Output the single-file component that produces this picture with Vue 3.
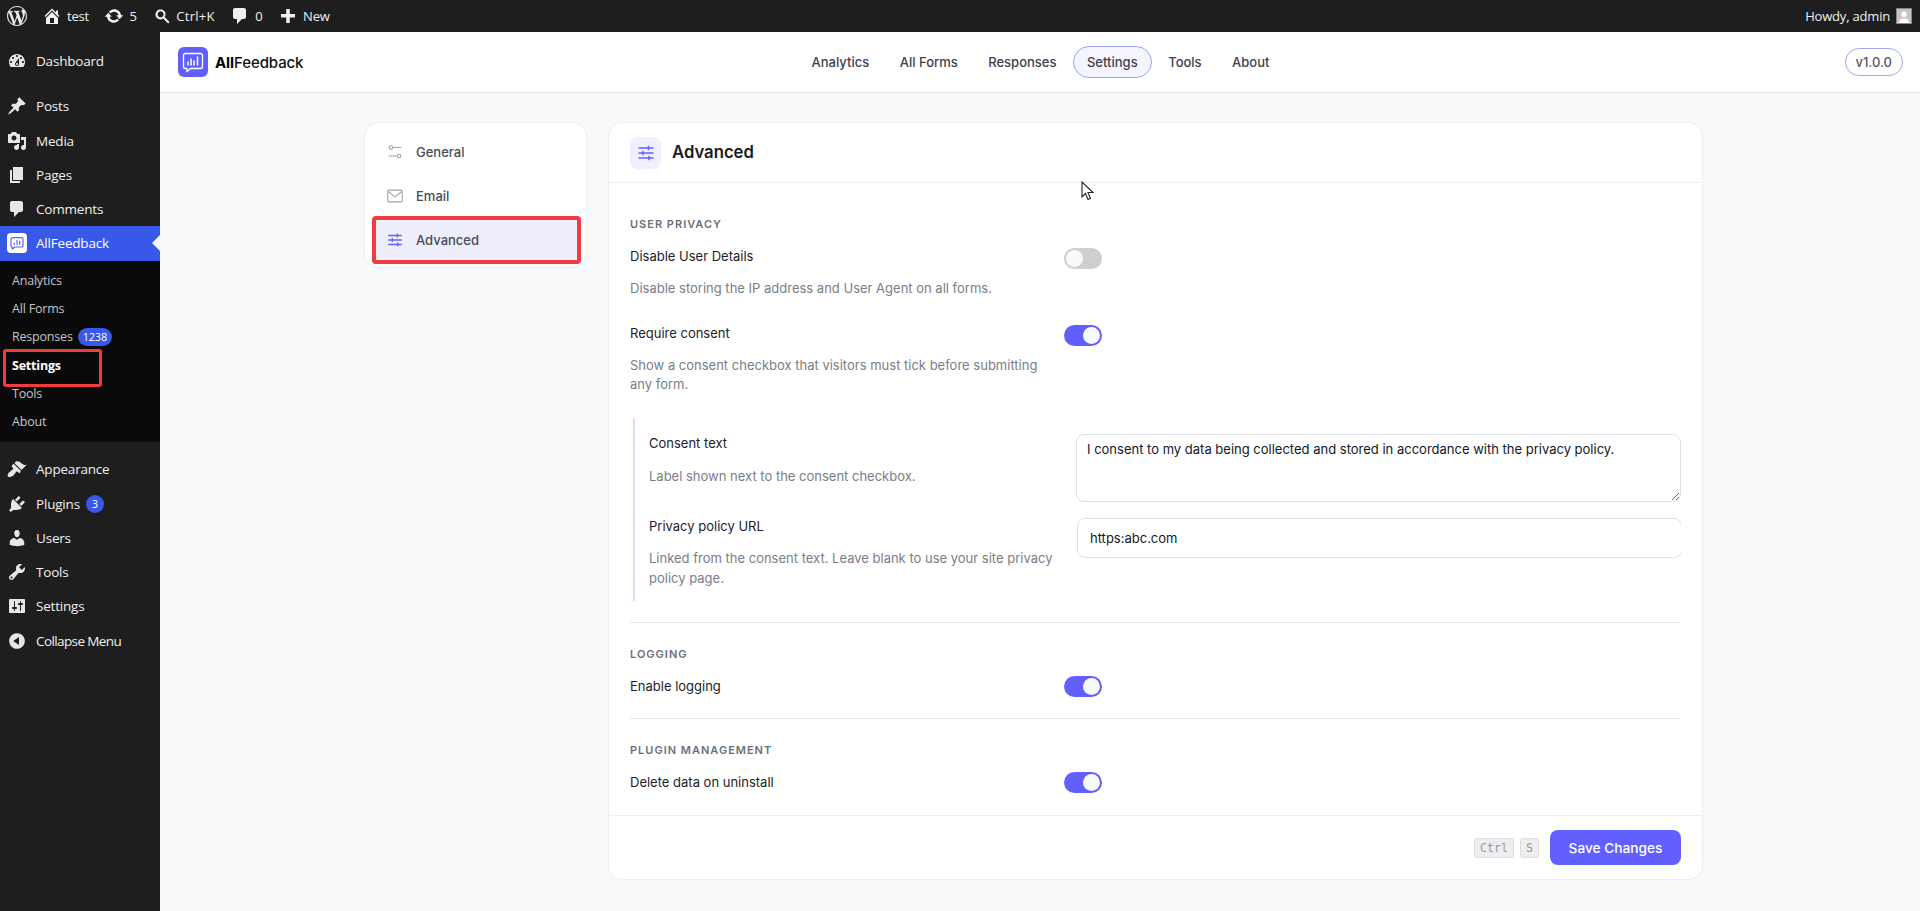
<script setup>
const adminBar = {
  wp: 'M20 10c0-5.51-4.49-10-10-10C4.48 0 0 4.49 0 10c0 5.52 4.48 10 10 10 5.51 0 10-4.48 10-10zM7.78 15.37L4.37 6.22c.55-.02 1.17-.08 1.17-.08.5-.06.44-1.13-.06-1.11 0 0-1.45.11-2.37.11-.18 0-.37 0-.58-.01C4.12 2.69 6.87 1.11 10 1.11c2.33 0 4.45.87 6.05 2.34-.68-.11-1.65.39-1.65 1.58 0 .74.45 1.36.9 2.1.35.61.55 1.36.55 2.46 0 1.49-1.4 5-1.4 5l-3.03-8.37c.54-.02.82-.17.82-.17.5-.05.44-1.25-.06-1.22 0 0-1.44.12-2.38.12-.87 0-2.33-.12-2.33-.12-.5-.03-.56 1.2-.06 1.22l.92.08 1.26 3.41zM17.41 10c.24-.64.74-1.87.43-4.25.7 1.29 1.05 2.71 1.05 4.25 0 3.29-1.73 6.24-4.4 7.78.97-2.59 1.94-5.2 2.92-7.78zM6.1 18.09C3.12 16.65 1.11 13.53 1.11 10c0-1.3.23-2.48.72-3.59C3.25 10.3 4.67 14.2 6.1 18.09zm4.03-6.63l2.58 6.98c-.86.29-1.76.45-2.71.45-.79 0-1.57-.11-2.29-.33.81-2.38 1.62-4.74 2.42-7.1z',
  home: 'M16 8.5l1.53 1.53-1.06 1.06L10 4.62l-6.47 6.47-1.06-1.06L10 2.5l4 4v-2h2v4zm-6-2.46l6 5.99V18H4v-5.97zM12 17v-5H8v5h4z',
  update: 'M10.2 3.28c3.53 0 6.43 2.61 6.92 6h2.08l-3.5 4-3.5-4h2.32c-.45-1.97-2.21-3.45-4.32-3.45-1.45 0-2.73.71-3.54 1.78L4.95 5.66C6.23 4.2 8.11 3.28 10.2 3.28zm-.4 13.44c-3.52 0-6.43-2.61-6.92-6H.8l3.5-4c1.17 1.33 2.33 2.67 3.5 4H5.48c.45 1.97 2.21 3.45 4.32 3.45 1.45 0 2.73-.71 3.54-1.78l1.71 1.95c-1.28 1.46-3.15 2.38-5.25 2.38z',
  search: 'M12.14 4.78c1.7 1.7 1.9 4.38.5 6.32l4.37 4.37c.39.39.39 1.02 0 1.41s-1.02.39-1.41 0l-4.37-4.37c-1.94 1.4-4.62 1.2-6.32-.5-1.95-1.95-1.95-5.12 0-7.07s5.12-1.95 7.07 0zM10.73 10.44c1.17-1.17 1.17-3.07 0-4.24s-3.07-1.17-4.24 0-1.17 3.07 0 4.24 3.07 1.17 4.24 0z',
  comment: 'M5 2h9c1.1 0 2 .9 2 2v7c0 1.1-.9 2-2 2h-2l-5 5v-5H5c-1.1 0-2-.9-2-2V4c0-1.1.9-2 2-2z',
  plus: 'M17 8v3.5h-5.2V17H8.2v-5.5H3V8h5.2V3h3.6v5H17z',
}
const icons = {
  dashboard: 'M3.76 16h12.48c1.1-1.37 1.76-3.11 1.76-5 0-4.42-3.58-8-8-8s-8 3.58-8 8c0 1.89.66 3.63 1.76 5zM10 4c.55 0 1 .45 1 1s-.45 1-1 1-1-.45-1-1 .45-1 1-1zM6 6c.55 0 1 .45 1 1s-.45 1-1 1-1-.45-1-1 .45-1 1-1zm8 0c.55 0 1 .45 1 1s-.45 1-1 1-1-.45-1-1 .45-1 1-1zm-5.37 5.55L12 7v6c0 1.1-.9 2-2 2s-2-.9-2-2c0-.57.24-1.08.63-1.45zM4 10c.55 0 1 .45 1 1s-.45 1-1 1-1-.45-1-1 .45-1 1-1zm12 0c.55 0 1 .45 1 1s-.45 1-1 1-1-.45-1-1 .45-1 1-1zm-5 3c0-.55-.45-1-1-1s-1 .45-1 1 .45 1 1 1 1-.45 1-1z',
  post: 'M10.44 3.02l1.82-1.82 6.36 6.35-1.83 1.82c-1.05-.68-2.48-.57-3.41.36l-.75.75c-.92.93-1.04 2.35-.35 3.41l-1.83 1.82-2.41-2.41-2.8 2.79c-.42.42-3.38 2.71-3.8 2.29s1.86-3.39 2.28-3.81l2.79-2.79L4.1 9.36l1.83-1.82c1.05.69 2.48.57 3.4-.36l.75-.75c.93-.92 1.05-2.35.36-3.41z',
  media: 'M13 11V4c0-.55-.45-1-1-1h-1.67L9 1H5L3.67 3H2c-.55 0-1 .45-1 1v7c0 .55.45 1 1 1h10c.55 0 1-.45 1-1zM7 4.5c1.38 0 2.5 1.12 2.5 2.5S8.38 9.5 7 9.5 4.5 8.38 4.5 7 5.62 4.5 7 4.5zM14 6h5v10.5c0 1.38-1.12 2.5-2.5 2.5S14 17.88 14 16.5s1.12-2.5 2.5-2.5c.17 0 .34.02.5.05V9h-3V6zm-4 8.05V13h2v3.5c0 1.38-1.12 2.5-2.5 2.5S7 17.88 7 16.5 8.12 14 9.5 14c.17 0 .34.02.5.05z',
  page: 'M6 15V2h10v13H6zm-1 1h8v2H3V5h2v11z',
  comment: adminBar.comment,
  appearance: 'M14.48 11.06L7.41 3.99l1.5-1.5c.5-.56 2.3-.47 3.51.32 1.21.8 1.43 1.28 2.91 2.1 1.18.64 2.45 1.26 4.45.85zm-.71.71L6.7 4.7 4.93 6.47c-.39.39-.39 1.02 0 1.41l1.06 1.06c.39.39.39 1.03 0 1.42-.6.6-1.43 1.11-2.21 1.69-.35.26-.7.53-1.01.84C1.43 13.23.78 15.17.66 16.25c-.07.58 0 1.13.32 1.45.33.32.88.39 1.46.32 1.08-.12 3.02-.77 4.36-2.11.31-.31.58-.66.84-1.01.58-.78 1.09-1.61 1.69-2.21.39-.39 1.03-.39 1.42 0l1.06 1.06c.39.39 1.02.39 1.41 0z',
  plugins: 'M13.11 4.36L9.87 7.6 8 5.73l3.24-3.24c.35-.34 1.05-.2 1.56.32.52.51.66 1.21.31 1.55zm-8 1.77l.91-1.12 9.01 9.01-1.19.84c-.71.71-2.63 1.16-3.82 1.16H6.14L4.9 17.26c-.59.59-1.54.59-2.12 0-.59-.58-.59-1.53 0-2.12l1.24-1.24v-3.88c0-1.13.4-3.19 1.09-3.89zm7.26 3.97l3.24-3.24c.34-.35 1.04-.21 1.55.31.52.51.66 1.21.31 1.55l-3.24 3.25z',
  users: 'M10 9.25c-2.27 0-2.73-3.44-2.73-3.44C7 4.02 7.82 2 9.97 2c2.16 0 2.98 2.02 2.71 3.81 0 0-.41 3.44-2.68 3.44zm0 2.57L12.72 10c2.39 0 4.52 2.33 4.52 4.53v2.49s-3.65 1.13-7.24 1.13c-3.65 0-7.24-1.13-7.24-1.13v-2.49c0-2.25 1.94-4.48 4.47-4.48z',
  tools: 'M16.68 9.77c-1.34 1.34-3.3 1.67-4.95.99l-5.41 6.52c-.99.99-2.59.99-3.58 0s-.99-2.59 0-3.57l6.52-5.42c-.68-1.65-.35-3.61.99-4.95 1.28-1.28 3.12-1.62 4.72-1.06l-2.89 2.89 2.82 2.82 2.86-2.87c.53 1.58.18 3.39-1.08 4.65zM3.81 16.21c.4.39 1.04.39 1.43 0 .4-.4.4-1.04 0-1.43-.39-.4-1.03-.4-1.43 0-.39.39-.39 1.03 0 1.43z',
  settings: 'M18 16V4c0-.55-.45-1-1-1H3c-.55 0-1 .45-1 1v12c0 .55.45 1 1 1h14c.55 0 1-.45 1-1zM8 11h1c.55 0 1 .45 1 1s-.45 1-1 1H8v1.5c0 .28-.22.5-.5.5s-.5-.22-.5-.5V13H6c-.55 0-1-.45-1-1s.45-1 1-1h1V5.5c0-.28.22-.5.5-.5s.5.22.5.5V11zm5-2h-1c-.55 0-1-.45-1-1s.45-1 1-1h1V5.5c0-.28.22-.5.5-.5s.5.22.5.5V7h1c.55 0 1 .45 1 1s-.45 1-1 1h-1v5.5c0 .28-.22.5-.5.5s-.5-.22-.5-.5V9z',
  collapse: 'M10 2.16c4.33 0 7.84 3.51 7.84 7.84s-3.51 7.84-7.84 7.84S2.16 14.33 2.16 10 5.71 2.16 10 2.16zm2 11.72V6.12L6.18 9.97z',
}
const topMenu = [
  { name: 'Posts', icon: icons.post },
  { name: 'Media', icon: icons.media },
  { name: 'Pages', icon: icons.page },
  { name: 'Comments', icon: icons.comment },
]
const bottomMenu = [
  { name: 'Appearance', icon: icons.appearance },
  { name: 'Plugins', icon: icons.plugins, badge: '3' },
  { name: 'Users', icon: icons.users },
  { name: 'Tools', icon: icons.tools },
  { name: 'Settings', icon: icons.settings },
  { name: 'Collapse Menu', icon: icons.collapse, tight: true },
]
const subMenu = [
  { name: 'Analytics' },
  { name: 'All Forms' },
  { name: 'Responses', badge: '1238' },
  { name: 'Settings', current: true },
  { name: 'Tools' },
  { name: 'About' },
]
const nav = ['Analytics', 'All Forms', 'Responses', 'Settings', 'Tools', 'About']
const consentText = 'I consent to my data being collected and stored in accordance with the privacy policy.'
</script>

<template>
  <div class="page">
    <header class="adminbar">
      <div class="ab-left">
        <svg class="ab-wp" viewBox="0 0 20 20"><path :d="adminBar.wp" /></svg>
        <span class="ab-item"><svg viewBox="0 0 20 20"><path :d="adminBar.home" /></svg>test</span>
        <span class="ab-item"><svg viewBox="0 0 20 20"><path :d="adminBar.update" /></svg>5</span>
        <span class="ab-item wide"><svg viewBox="0 0 20 20"><path :d="adminBar.search" /></svg>Ctrl+K</span>
        <span class="ab-item"><svg viewBox="0 0 20 20"><path :d="adminBar.comment" /></svg>0</span>
        <span class="ab-item"><svg viewBox="0 0 20 20"><path :d="adminBar.plus" /></svg>New</span>
      </div>
      <div class="ab-right">
        Howdy, admin
        <span class="avatar">
          <svg viewBox="0 0 16 16"><rect width="16" height="16" fill="#c4c4c4" /><circle cx="8" cy="6" r="3.2" fill="#fff" /><path d="M2 16c.5-4 3-5.5 6-5.5s5.500 1.500 6 5.500z" fill="#fff" /></svg>
        </span>
      </div>
    </header>

    <div class="body">
      <aside class="sidebar">
        <div class="menu-item first">
          <svg viewBox="0 0 20 20"><path :d="icons.dashboard" /></svg>
          <span>Dashboard</span>
        </div>
        <div class="menu-sep"></div>
        <div v-for="m in topMenu" :key="m.name" class="menu-item">
          <svg viewBox="0 0 20 20"><path :d="m.icon" /></svg>
          <span>{{ m.name }}</span>
        </div>
        <div class="menu-item active">
          <span class="af-mini">
            <svg viewBox="0 0 24 24" fill="none" stroke="#6060ff" stroke-width="1.8" stroke-linejoin="round"><path d="M5 4h14a2 2 0 0 1 2 2v10a2 2 0 0 1-2 2H9l-4 3v-3a2 2 0 0 1-2-2V6a2 2 0 0 1 2-2z" /><path d="M8 14v-2M12 14V8M16 14V9" stroke-linecap="round" /></svg>
          </span>
          <span>AllFeedback</span>
          <i class="arrow"></i>
        </div>
        <div class="submenu">
          <div v-for="s in subMenu" :key="s.name" class="sub-item" :class="{ current: s.current }">
            {{ s.name }}
            <span v-if="s.badge" class="badge sub-badge">{{ s.badge }}</span>
            <i v-if="s.current" class="mark mark-sub"></i>
          </div>
        </div>
        <div class="menu-gap"></div>
        <div v-for="m in bottomMenu" :key="m.name" class="menu-item" :class="{ tight: m.tight }">
          <svg viewBox="0 0 20 20"><path :d="m.icon" /></svg>
          <span>{{ m.name }}</span>
          <span v-if="m.badge" class="badge">{{ m.badge }}</span>
        </div>
      </aside>

      <main class="main">
        <div class="topnav">
          <div class="brand">
            <span class="brand-logo">
              <svg viewBox="0 0 30 30" fill="none" stroke="#fff" stroke-width="1.3" stroke-linejoin="round" stroke-linecap="round"><path d="M7.500 6.500h15a2 2 0 0 1 2 2v11a2 2 0 0 1-2 2H12.500l-3.500 3v-3H7.500a2 2 0 0 1-2-2v-11a2 2 0 0 1 2-2z" /><path d="M10 18v-3M13 18v-6M16 18v-4M19.500 18v-8" stroke-width="1.500" /></svg>
            </span>
            <span class="brand-name"><b>All</b>Feedback</span>
          </div>
          <nav class="nav">
            <a v-for="n in nav" :key="n" :class="{ on: n === 'Settings' }">{{ n }}</a>
          </nav>
          <div class="version-wrap"><span class="version">v1.0.0</span></div>
        </div>

        <div class="content">
          <div class="side-card">
            <div class="side-item">
              <svg viewBox="0 0 20 20" fill="none" stroke="#9ca3af" stroke-width="1.200"><circle cx="5.500" cy="5" r="2" /><path d="M8 5h9M3 14.500h9" /><circle cx="14.500" cy="14.500" r="2" /></svg>
              General
            </div>
            <div class="side-item">
              <svg viewBox="0 0 20 20" fill="none" stroke="#a3a3a8" stroke-width="1.200"><rect x="2" y="3.500" width="16" height="13" rx="1.500" /><path d="M2.500 5l7.500 6 7.500-6" /></svg>
              Email
            </div>
            <div class="side-item selected">
              <svg viewBox="0 0 20 20" fill="none" stroke="#6160ff" stroke-width="1.400"><path d="M2.500 5h15M2.500 10h15M2.500 15h15" /><path d="M12.500 2.800v4.400M7 7.800v4.400M13 12.800v4.400" /></svg>
              Advanced
              <i class="mark mark-side"></i>
            </div>
          </div>

          <section class="panel">
            <div class="panel-head">
              <span class="panel-icon">
                <svg viewBox="0 0 20 20" fill="none" stroke="#6160ff" stroke-width="1.400"><path d="M2.500 5h15M2.500 10h15M2.500 15h15" /><path d="M12.500 2.800v4.400M7 7.800v4.400M13 12.800v4.400" /></svg>
              </span>
              <h1>Advanced</h1>
            </div>

            <div class="panel-body">
              <div class="group">
                <h2>USER PRIVACY</h2>
                <div class="row row-toggle">
                  <div class="text">
                    <div class="label">Disable User Details</div>
                    <p class="desc">Disable storing the IP address and User Agent on all forms.</p>
                  </div>
                  <span class="toggle"></span>
                </div>
                <div class="row row-toggle consent-row">
                  <div class="text">
                    <div class="label">Require consent</div>
                    <p class="desc">Show a consent checkbox that visitors must tick before submitting any form.</p>
                  </div>
                  <span class="toggle on"></span>
                </div>
                <div class="nested">
                  <div class="row nested-row">
                    <div class="text">
                      <div class="label">Consent text</div>
                      <p class="desc">Label shown next to the consent checkbox.</p>
                    </div>
                    <textarea class="field area" readonly :value="consentText"></textarea>
                  </div>
                  <div class="row nested-row url-row">
                    <div class="text">
                      <div class="label">Privacy policy URL</div>
                      <p class="desc">Linked from the consent text. Leave blank to use your site privacy policy page.</p>
                    </div>
                    <input class="field input" readonly value="https:abc.com" />
                  </div>
                </div>
              </div>

              <div class="group divided logging">
                <h2>LOGGING</h2>
                <div class="row single">
                  <div class="text"><div class="label">Enable logging</div></div>
                  <span class="toggle on"></span>
                </div>
              </div>

              <div class="group divided plugin">
                <h2>PLUGIN MANAGEMENT</h2>
                <div class="row single">
                  <div class="text"><div class="label">Delete data on uninstall</div></div>
                  <span class="toggle on"></span>
                </div>
              </div>
            </div>

            <div class="panel-foot">
              <kbd>Ctrl</kbd>
              <kbd>S</kbd>
              <button class="save" type="button">Save Changes</button>
            </div>
          </section>
        </div>

        <svg class="cursor" width="14" height="21" viewBox="0 0 14 21"><path d="M1 1v15l3.500-3.500 2.500 6 2.500-1-2.500-6h5z" fill="#fff" stroke="#23233a" stroke-width="1.100" /></svg>
      </main>
    </div>
  </div>
</template>

<style>
html, body { margin: 0; background: #f8f9fb; }
</style>

<style scoped>
* { box-sizing: border-box; }
.page { width: 1920px; height: 911px; overflow: hidden; display: flex; flex-direction: column; font-family: Inter, "Liberation Sans", sans-serif; background: #f8f9fb; }
svg { display: block; }

.adminbar { height: 32px; flex: none; background: #1e1e1e; color: #f0f0f0; display: flex; justify-content: space-between; align-items: center; font: 13px/32px "Open Sans", sans-serif; letter-spacing: -0.2px; }
.ab-left { display: flex; align-items: center; }
.ab-wp { width: 20px; height: 20px; margin: 0 15px 0 7px; fill: #e8e8e8; }
.ab-item { display: flex; align-items: center; gap: 5px; margin-right: 15.500px; }
.ab-item.wide { letter-spacing: 0.3px; gap: 4px; }
.ab-item svg { width: 20px; height: 20px; fill: #f0f0f0; }
.ab-right { display: flex; align-items: center; gap: 6px; padding-right: 8px; }
.avatar { width: 16px; height: 16px; border: 1px solid #888; }
.avatar svg { width: 100%; height: 100%; }

.body { flex: 1; display: flex; min-height: 0; }
.sidebar { width: 160px; flex: none; background: #1e1e1e; color: #f0f0f0; font: 13.5px "Open Sans", sans-serif; letter-spacing: -0.2px; padding-top: 12px; }
.menu-item { position: relative; height: 34.25px; display: flex; align-items: center; padding-left: 7px; }
.menu-item > svg { width: 20px; height: 20px; margin-right: 9px; fill: #e6e6e6; }
.menu-item.tight { letter-spacing: -0.6px; }
.menu-sep { height: 11px; }
.menu-gap { height: 10.500px; }
.menu-item.active { background: #3858e9; color: #fff; }
.af-mini { width: 20px; height: 20px; background: #fff; border-radius: 4px; margin-right: 9px; padding: 2px; }
.arrow { position: absolute; right: 0; top: 50%; margin-top: -8px; border: 8px solid transparent; border-right-color: #f8f9fb; border-left-width: 0; }
.submenu { background: #0a0a0a; padding: 6px 0; font-size: 12.5px; color: #c3c4c7; }
.sub-item { position: relative; height: 28.2px; display: flex; align-items: center; padding-left: 12px; }
.sub-item.current { color: #fff; font-weight: 700; }
.badge { display: inline-block; height: 18px; min-width: 18px; padding: 0 5px; margin-left: 6px; border-radius: 9px; background: #3858e9; color: #fff; font-size: 11px; line-height: 18px; text-align: center; }
.sub-badge { margin-left: 5px; }
.mark { position: absolute; display: block; pointer-events: none; border: solid #ef3d3f; }
.mark-sub { left: 3px; top: -2px; width: 99px; height: 38px; border-width: 3px; border-radius: 3px; }
.mark-side { left: -4px; top: -4px; right: -4px; bottom: -4px; border-width: 4px; border-radius: 4px; }

.main { position: relative; flex: 1; min-width: 0; display: flex; flex-direction: column; }
.topnav { height: 61px; flex: none; background: #fff; border-bottom: 1px solid #e0e3e8; display: grid; grid-template-columns: 1fr auto 1fr; align-items: center; padding: 0 17px 0 18px; }
.brand { display: flex; align-items: center; gap: 7px; }
.brand-logo { width: 30px; height: 30px; border-radius: 6px; background: #6160ff; }
.brand-name { font-size: 15px; font-weight: 500; color: #111; letter-spacing: -0.1px; }
.brand-name b { font-weight: 700; color: #000; }
.nav { display: flex; gap: 2.500px; }
.nav a { display: block; height: 32px; line-height: 30px; padding: 0 13px; border: 1px solid transparent; border-radius: 16px; font-size: 13px; font-weight: 500; color: #3c4150; }
.nav a.on { border-color: #9ea1fb; background: #f5f5ff; }
.version-wrap { display: flex; justify-content: flex-end; }
.version { height: 28px; line-height: 26px; padding: 0 10px; border: 1px solid #a3a6fb; border-radius: 14px; font-size: 13px; color: #555a66; font-weight: 500; }

.content { display: flex; align-items: flex-start; gap: 21px; padding: 29px 0 0 204px; }
.side-card { width: 223px; flex: none; background: #fff; border: 1px solid #ebedf0; border-radius: 14px; padding: 9px 8px 7px; display: flex; flex-direction: column; gap: 4px; }
.side-item { position: relative; height: 40px; display: flex; align-items: center; gap: 12px; padding-left: 10px; border-radius: 3px; font-size: 13px; font-weight: 500; color: #474c59; margin: 0 1px 0 3px; }
.side-item svg { width: 18px; height: 18px; flex: none; }
.side-item.selected { background: #eeedfc; }

.panel { width: 1095px; height: 758px; flex: none; background: #fff; border: 1px solid #ebedf0; border-radius: 14px; display: flex; flex-direction: column; }
.panel-head { height: 60px; flex: none; display: flex; align-items: center; gap: 11px; padding: 0 21px; border-bottom: 1px solid #ebedf0; }
.panel-icon { width: 31px; height: 32px; border-radius: 8px; background: #f0effe; display: flex; align-items: center; justify-content: center; }
.panel-icon svg { width: 20px; height: 20px; }
h1 { margin: -2px 0 0; font-size: 16.700px; font-weight: 600; color: #1a1a24; }
.panel-body { flex: 1; padding: 0 21px; }
h2 { margin: 0; font-size: 11px; font-weight: 600; letter-spacing: 1px; color: #6b6f7b; line-height: 14px; }
.group { padding-top: 34px; }
.row { display: flex; justify-content: space-between; }
.text { width: 420px; }
.label { font-size: 13px; color: #1d1d29; line-height: 18px; }
.desc { margin: 14px 0 0; font-size: 13px; color: #7b7d87; line-height: 19.500px; }
.row-toggle { margin-top: 16px; justify-content: flex-start; }
.row-toggle .text { width: 434px; padding-right: 14px; }
.consent-row { margin-top: 25px; }
.toggle { position: relative; width: 38px; height: 21px; flex: none; margin-top: 1px; border-radius: 11px; background: #cfcfd2; }
.toggle::after { content: ""; position: absolute; left: 2px; top: 2px; width: 17px; height: 17px; border-radius: 50%; background: #f8f9fb; }
.toggle.on { background: #6160ff; }
.toggle.on::after { left: 19px; }
.nested { margin: 23px 0 0 3px; border-left: 2px solid #dcdcfb; padding: 16px 0 0 14px; height: 183px; overflow: hidden; }
.nested-row .desc { margin-top: 15px; }
.url-row { margin-top: 15px; }
.url-row .desc { margin-top: 14.500px; }
.field { flex: none; width: 605px; border: 1px solid #dfe0e6; border-radius: 8px; background: #fff; font: 13px Inter, sans-serif; color: #111827; outline: none; }
.area { height: 68px; padding: 6px 10px; }
.input { width: 605px; height: 40px; padding: 0 12px; margin: 1px -1px 0 0; }
.divided { border-top: 1px solid #e8e9ed; }
.logging { margin-top: 21px; padding-top: 24px; height: 96px; }
.plugin { padding-top: 24px; }
.single { margin-top: 15px; justify-content: flex-start; align-items: center; height: 21px; }
.single .text { width: 434px; }
.single .toggle { margin-top: 0; }
.plugin .single { margin-top: 15px; }
.panel-foot { height: 64px; flex: none; border-top: 1px solid #ebedf0; display: flex; align-items: center; justify-content: flex-end; padding: 0 21px; gap: 6px; }
kbd { height: 20px; padding: 0 5px; border: 1px solid #dcdde1; border-radius: 3px; background: #eeeef0; color: #95979d; font: 11.600px/18px "DejaVu Sans Mono", monospace; }
.save { width: 131px; height: 35px; margin-left: 5px; border: 0; border-radius: 8px; background: #6160ff; color: #fff; font: 500 13.700px Inter, sans-serif; }
.cursor { position: absolute; left: 921px; top: 149px; }
</style>
